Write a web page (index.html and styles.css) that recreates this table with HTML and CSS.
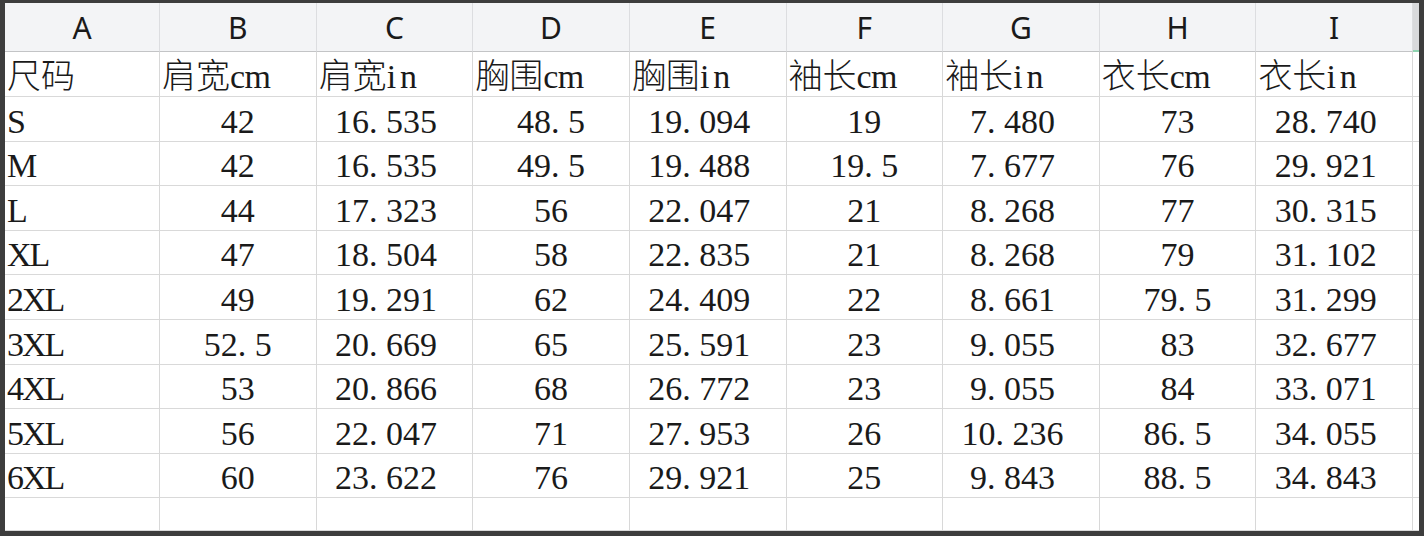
FILE: index.html
```html
<!DOCTYPE html>
<html lang="zh-CN">
<head>
<meta charset="utf-8">
<title>尺码表</title>
<link rel="stylesheet" href="styles.css">
</head>
<body>
<div class="sheet">
  <div class="row head">
    <div class="hc">A</div><div class="hc">B</div><div class="hc">C</div><div class="hc">D</div><div class="hc">E</div><div class="hc">F</div><div class="hc">G</div><div class="hc">H</div><div class="hc">I</div><div class="hc edge"></div>
  </div>
  <div class="row first">
    <div class="c t">尺码</div><div class="c t">肩宽<span class="cm">cm</span></div><div class="c t">肩宽<span class="in">in</span></div><div class="c t">胸围<span class="cm">cm</span></div><div class="c t">胸围<span class="in">in</span></div><div class="c t">袖长<span class="cm">cm</span></div><div class="c t">袖长<span class="in">in</span></div><div class="c t">衣长<span class="cm">cm</span></div><div class="c t">衣长<span class="in">in</span></div><div class="c x"></div>
  </div>
  <div class="row">
    <div class="c t s">S</div><div class="c n">42</div><div class="c n f">16<span class="p">.</span>535</div><div class="c n">48<span class="p">.</span>5</div><div class="c n f">19<span class="p">.</span>094</div><div class="c n">19</div><div class="c n f">7<span class="p">.</span>480</div><div class="c n">73</div><div class="c n f">28<span class="p">.</span>740</div><div class="c x"></div>
  </div>
  <div class="row">
    <div class="c t s">M</div><div class="c n">42</div><div class="c n f">16<span class="p">.</span>535</div><div class="c n">49<span class="p">.</span>5</div><div class="c n f">19<span class="p">.</span>488</div><div class="c n">19<span class="p">.</span>5</div><div class="c n f">7<span class="p">.</span>677</div><div class="c n">76</div><div class="c n f">29<span class="p">.</span>921</div><div class="c x"></div>
  </div>
  <div class="row">
    <div class="c t s">L</div><div class="c n">44</div><div class="c n f">17<span class="p">.</span>323</div><div class="c n">56</div><div class="c n f">22<span class="p">.</span>047</div><div class="c n">21</div><div class="c n f">8<span class="p">.</span>268</div><div class="c n">77</div><div class="c n f">30<span class="p">.</span>315</div><div class="c x"></div>
  </div>
  <div class="row">
    <div class="c t s">XL</div><div class="c n">47</div><div class="c n f">18<span class="p">.</span>504</div><div class="c n">58</div><div class="c n f">22<span class="p">.</span>835</div><div class="c n">21</div><div class="c n f">8<span class="p">.</span>268</div><div class="c n">79</div><div class="c n f">31<span class="p">.</span>102</div><div class="c x"></div>
  </div>
  <div class="row">
    <div class="c t s">2XL</div><div class="c n">49</div><div class="c n f">19<span class="p">.</span>291</div><div class="c n">62</div><div class="c n f">24<span class="p">.</span>409</div><div class="c n">22</div><div class="c n f">8<span class="p">.</span>661</div><div class="c n">79<span class="p">.</span>5</div><div class="c n f">31<span class="p">.</span>299</div><div class="c x"></div>
  </div>
  <div class="row">
    <div class="c t s">3XL</div><div class="c n">52<span class="p">.</span>5</div><div class="c n f">20<span class="p">.</span>669</div><div class="c n">65</div><div class="c n f">25<span class="p">.</span>591</div><div class="c n">23</div><div class="c n f">9<span class="p">.</span>055</div><div class="c n">83</div><div class="c n f">32<span class="p">.</span>677</div><div class="c x"></div>
  </div>
  <div class="row">
    <div class="c t s">4XL</div><div class="c n">53</div><div class="c n f">20<span class="p">.</span>866</div><div class="c n">68</div><div class="c n f">26<span class="p">.</span>772</div><div class="c n">23</div><div class="c n f">9<span class="p">.</span>055</div><div class="c n">84</div><div class="c n f">33<span class="p">.</span>071</div><div class="c x"></div>
  </div>
  <div class="row">
    <div class="c t s">5XL</div><div class="c n">56</div><div class="c n f">22<span class="p">.</span>047</div><div class="c n">71</div><div class="c n f">27<span class="p">.</span>953</div><div class="c n">26</div><div class="c n f">10<span class="p">.</span>236</div><div class="c n">86<span class="p">.</span>5</div><div class="c n f">34<span class="p">.</span>055</div><div class="c x"></div>
  </div>
  <div class="row">
    <div class="c t s">6XL</div><div class="c n">60</div><div class="c n f">23<span class="p">.</span>622</div><div class="c n">76</div><div class="c n f">29<span class="p">.</span>921</div><div class="c n">25</div><div class="c n f">9<span class="p">.</span>843</div><div class="c n">88<span class="p">.</span>5</div><div class="c n f">34<span class="p">.</span>843</div><div class="c x"></div>
  </div>
  <div class="row last">
    <div class="c"></div><div class="c"></div><div class="c"></div><div class="c"></div><div class="c"></div><div class="c"></div><div class="c"></div><div class="c"></div><div class="c"></div><div class="c x"></div>
  </div>
</div>
</body>
</html>
```

FILE: styles.css
```css
* {
  box-sizing: border-box;
}

html,
body {
  margin: 0;
  padding: 0;
}

body {
  width: 1424px;
  height: 536px;
  background: #3d3d3d;
  overflow: hidden;
}

.sheet {
  margin: 3px 5px 5px 5px;
  width: 1414px;
  height: 528px;
  background: #ffffff;
  display: flex;
  flex-direction: column;
  overflow: hidden;
}

.row {
  display: grid;
  grid-template-columns: 155px repeat(8, 156.625px) 1fr;
  height: 44.6px;
  flex: none;
}

.row.head {
  height: 49px;
}

.row.first {
  height: 45px;
}

.row.last {
  flex: 1;
}

.hc {
  background: #f3f4f6;
  border-right: 1px solid #dcdde0;
  border-bottom: 1px solid #c3c4c6;
  display: flex;
  align-items: center;
  justify-content: center;
  font-family: "Noto Sans", "Open Sans", sans-serif;
  font-size: 30px;
  line-height: 34px;
  color: #1a1a1a;
  padding-top: 1px;
}

.hc.edge {
  background: #d8d9db;
  border-right: none;
  border-bottom: 2px solid #8fd3b0;
}

.c {
  border-right: 1px solid #d8d8d8;
  border-bottom: 1px solid #d9d9d9;
  display: flex;
  align-items: flex-end;
  font-family: "Liberation Serif", "Noto Sans CJK SC", serif;
  font-size: 34px;
  font-weight: 300;
  line-height: 36px;
  color: #1a1a1a;
  padding-bottom: 1px;
  white-space: nowrap;
}

.c.x {
  border-right: none;
}

.t {
  justify-content: flex-start;
  padding-left: 2px;
}

.t.s {
  letter-spacing: -2px;
}

.n {
  justify-content: center;
}

.n.f {
  padding-right: 17px;
}

.p {
  letter-spacing: 0.25em;
}

.in {
  letter-spacing: 4px;
}

.cm {
  letter-spacing: -0.5px;
}
```
